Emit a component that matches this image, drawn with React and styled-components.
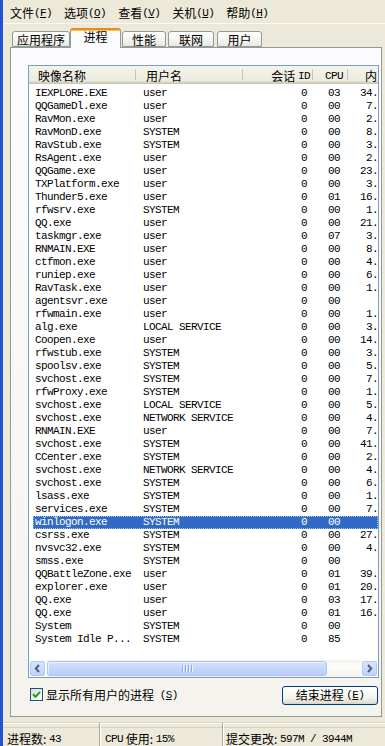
import React from 'react';
import styled, { createGlobalStyle } from 'styled-components';

const Global = createGlobalStyle`
  html, body { margin: 0; padding: 0; background: #ece9d8; }
  body { font-family: "Noto Sans CJK SC", sans-serif; font-size: 12px; color: #000; }
  #root { width: 385px; height: 746px; }
`;

const MONO = `"Liberation Mono", "DejaVu Sans Mono", monospace`;
const CJK = `"Noto Sans CJK SC", "Noto Sans", sans-serif`;

const Frame = styled.div`
  width: 385px;
  height: 746px;
  box-sizing: border-box;
  border-left: 3px solid #2452d2;
  background: #ece9d8;
  display: flex;
  flex-direction: column;
  overflow: hidden;
`;

const MenuBar = styled.div`
  height: 24px;
  flex: none;
  display: flex;
  align-items: center;
  padding: 3px 0 0 1px;
  border-bottom: 1px solid #fbfaf6;
  box-sizing: border-box;
`;

const MenuItem = styled.div`
  padding: 0 6px;
  font-family: ${CJK};
  font-size: 12px;
  line-height: 14px;
  white-space: nowrap;
  display: flex;
  align-items: center;
`;

const Latin = styled.span`
  font-family: ${MONO};
  font-size: 11px;
  letter-spacing: -0.6px;
  u { text-decoration: underline; text-underline-offset: 1px; }
`;

const TabStrip = styled.div`
  flex: none;
  height: 19px;
  margin-top: 4px;
  padding-left: 9px;
  display: flex;
  align-items: flex-end;
  position: relative;
  z-index: 2;
`;

const Tab = styled.div`
  box-sizing: border-box;
  width: ${p => p.$w}px;
  margin-left: ${p => p.$ml || 0}px;
  height: ${p => (p.$active ? 20 : 16)}px;
  margin-bottom: ${p => (p.$active ? -1 : 0)}px;
  border: 1px solid #919b9c;
  border-bottom: ${p => (p.$active ? 'none' : '1px solid #919b9c')};
  border-radius: 3px 3px 0 0;
  background: ${p => (p.$active ? '#fcfcfe' : 'linear-gradient(#ffffff, #f3f3ef 60%, #e9e8e0)')};
  ${p => p.$active && `border-top: 2px solid #e68b2c; box-shadow: inset 0 1px 0 #ffc73c;`}
  font-family: ${CJK};
  font-size: 12px;
  line-height: 12px;
  display: flex;
  justify-content: center;
  padding-top: ${p => (p.$active ? 1 : 2)}px;
  white-space: nowrap;
`;

const Panel = styled.div`
  flex: none;
  box-sizing: border-box;
  height: 670px;
  margin: 0 3px 0 7px;
  border: 1px solid #919b9c;
  background: linear-gradient(#fcfcfe, #f4f3ee);
  padding: 17px 2px 0 17px;
  display: flex;
  flex-direction: column;
`;

const List = styled.div`
  box-sizing: border-box;
  height: 613px;
  width: 351px;
  border: 1px solid #7f9db9;
  background: #fff;
  display: flex;
  flex-direction: column;
  overflow: hidden;
`;

const Header = styled.div`
  flex: none;
  height: 18px;
  display: flex;
  background: linear-gradient(#f4f3ec, #ebeadb);
  box-shadow: inset 0 -1px 0 #cbc7b8, inset 0 -2px 0 #d6d2c2, inset 0 -3px 0 #e2decd;
`;

const HeadCell = styled.div`
  box-sizing: border-box;
  flex: none;
  width: ${p => p.$w}px;
  height: 18px;
  padding: 1px ${p => p.$pr || 0}px 0 ${p => p.$pl || 0}px;
  display: flex;
  align-items: center;
  justify-content: ${p => (p.$right ? 'flex-end' : 'flex-start')};
  font-family: ${CJK};
  font-size: 12px;
  line-height: 14px;
  white-space: nowrap;
  overflow: hidden;
  position: relative;
  ${p => !p.$last && `
    &::after {
      content: '';
      position: absolute;
      right: 0;
      top: 3px;
      bottom: 4px;
      width: 1px;
      background: #c7c5b2;
      box-shadow: 1px 0 0 #fff;
    }
  `}
`;

const Rows = styled.div`
  flex: 1;
  padding-top: 3px;
  overflow: hidden;
`;

const Row = styled.div`
  height: 13px;
  margin-left: 4px;
  display: flex;
  background: ${p => (p.$sel ? '#316ac5' : 'transparent')};
  color: ${p => (p.$sel ? '#fff' : '#000')};
  ${p => p.$sel && `outline: 1px dotted #a9c0ea; outline-offset: -1px;`}
`;

const Cell = styled.div`
  box-sizing: border-box;
  flex: none;
  width: ${p => p.$w}px;
  padding: 0 ${p => p.$pr || 0}px 0 ${p => p.$pl || 0}px;
  text-align: ${p => (p.$right ? 'right' : 'left')};
  font-family: ${MONO};
  font-size: 11px;
  letter-spacing: -0.6px;
  line-height: 13px;
  white-space: nowrap;
  overflow: hidden;
`;

const HScroll = styled.div`
  flex: none;
  height: 17px;
  display: flex;
  background: #fbfbf8;
`;

const ScrollBtn = styled.div`
  box-sizing: border-box;
  width: 17px;
  height: 17px;
  flex: none;
  border: 1px solid #fff;
  display: flex;
  align-items: center;
  justify-content: center;
  > span {
    box-sizing: border-box;
    width: 15px;
    height: 15px;
    border-radius: 2px;
    border: 1px solid #b4c8f6;
    background: linear-gradient(#d9e5fe, #bfd2fc);
    display: flex;
    align-items: center;
    justify-content: center;
  }
`;

const Track = styled.div`
  flex: 1;
  display: flex;
  align-items: center;
  background: linear-gradient(#f3f2ec, #fefefb 40%, #f3f2ec);
`;

const Thumb = styled.div`
  box-sizing: border-box;
  height: 15px;
  margin-left: 1px;
  border-radius: 3px;
  border: 1px solid #aec3f3;
  background: linear-gradient(#d5e2fd, #c5d6fc 50%, #b9cdfb);
  box-shadow: inset 1px 1px 0 #e8effe;
  display: flex;
  align-items: center;
  justify-content: center;
  gap: 1px;
  > i {
    width: 1px;
    height: 7px;
    background: #8faaf0;
    box-shadow: 1px 0 0 #eef3fe;
    margin-right: 1px;
  }
`;

const Controls = styled.div`
  flex: none;
  width: 351px;
  margin-top: 7px;
  height: 19px;
  display: flex;
  align-items: center;
  justify-content: space-between;
`;

const CheckLabel = styled.label`
  display: flex;
  align-items: center;
  gap: 3px;
  padding-left: 2px;
  font-family: ${CJK};
  font-size: 12px;
  line-height: 14px;
  white-space: nowrap;
`;

const CheckBox = styled.span`
  box-sizing: border-box;
  width: 13px;
  height: 13px;
  border: 1px solid #1c5180;
  background: linear-gradient(135deg, #dcdcd7, #fff);
  display: flex;
  align-items: center;
  justify-content: center;
`;

const Button = styled.div`
  box-sizing: border-box;
  width: 96px;
  height: 19px;
  margin-top: 1px;
  border: 1px solid #003c74;
  border-radius: 3px;
  background: linear-gradient(#ffffff, #f4f4f0 60%, #e3e0d6 90%, #d6d0c5);
  display: flex;
  align-items: center;
  justify-content: center;
  font-family: ${CJK};
  font-size: 12px;
  line-height: 14px;
  white-space: nowrap;
  margin-right: 1px;
`;

const StatusBar = styled.div`
  flex: 1;
  margin-top: 5px;
  border-top: 1px solid #d8d4c4;
  box-shadow: inset 0 1px 0 #fff, inset 0 4px 0 #ece9d8, inset 0 5px 0 #d8d4c4;
  display: flex;
  align-items: stretch;
`;

const Pane = styled.div`
  box-sizing: border-box;
  width: ${p => (p.$w ? `${p.$w}px` : 'auto')};
  flex: ${p => (p.$w ? 'none' : '1')};
  padding-left: ${p => p.$pl}px;
  padding-top: 8px;
  display: flex;
  align-items: center;
  font-family: ${CJK};
  font-size: 12px;
  line-height: 14px;
  white-space: nowrap;
  ${p => p.$sep && `border-left: 1px solid #aca899; box-shadow: inset 1px 0 0 #fff;`}
`;

const data = `IEXPLORE.EXE|user|03|34
QQGameDl.exe|user|00|7
RavMon.exe|user|00|2
RavMonD.exe|SYSTEM|00|8
RavStub.exe|SYSTEM|00|3
RsAgent.exe|user|00|2
QQGame.exe|user|00|23
TXPlatform.exe|user|00|3
Thunder5.exe|user|01|16
rfwsrv.exe|SYSTEM|00|1
QQ.exe|user|00|21
taskmgr.exe|user|07|3
RNMAIN.EXE|user|00|8
ctfmon.exe|user|00|4
runiep.exe|user|00|6
RavTask.exe|user|00|1
agentsvr.exe|user|00|
rfwmain.exe|user|00|1
alg.exe|LOCAL SERVICE|00|3
Coopen.exe|user|00|14
rfwstub.exe|SYSTEM|00|3
spoolsv.exe|SYSTEM|00|5
svchost.exe|SYSTEM|00|7
rfwProxy.exe|SYSTEM|00|1
svchost.exe|LOCAL SERVICE|00|5
svchost.exe|NETWORK SERVICE|00|4
RNMAIN.EXE|user|00|7
svchost.exe|SYSTEM|00|41
CCenter.exe|SYSTEM|00|2
svchost.exe|NETWORK SERVICE|00|4
svchost.exe|SYSTEM|00|6
lsass.exe|SYSTEM|00|1
services.exe|SYSTEM|00|7
winlogon.exe|SYSTEM|00|
csrss.exe|SYSTEM|00|27
nvsvc32.exe|SYSTEM|00|4
smss.exe|SYSTEM|00|
QQBattleZone.exe|user|01|39
explorer.exe|user|01|20
QQ.exe|user|03|17
QQ.exe|user|01|16
System|SYSTEM|00|
System Idle P...|SYSTEM|85|`
  .split('\n')
  .map(l => l.split('|'));

const SELECTED = 33;

const menus = [
  ['文件', 'F'],
  ['选项', 'O'],
  ['查看', 'V'],
  ['关机', 'U'],
  ['帮助', 'H'],
];

const tabs = [
  { label: '应用程序', w: 58, ml: 0 },
  { label: '进程', w: 51, ml: 0, active: true },
  { label: '性能', w: 44, ml: 1 },
  { label: '联网', w: 46, ml: 2 },
  { label: '用户', w: 45, ml: 3 },
];

const Arrow = ({ dir }) => (
  <svg width="7" height="9" viewBox="0 0 7 9">
    <path
      d={dir === 'left' ? 'M5 1 L1.8 4.5 L5 8' : 'M2 1 L5.2 4.5 L2 8'}
      fill="none"
      stroke="#4d6185"
      strokeWidth="2"
    />
  </svg>
);

export default function App() {
  return (
    <>
      <Global />
      <Frame>
        <MenuBar>
          {menus.map(([t, k]) => (
            <MenuItem key={k}>
              {t}
              <Latin>
                (<u>{k}</u>)
              </Latin>
            </MenuItem>
          ))}
        </MenuBar>
        <TabStrip>
          {tabs.map(t => (
            <Tab key={t.label} $w={t.w} $ml={t.ml} $active={t.active}>
              {t.label}
            </Tab>
          ))}
        </TabStrip>
        <Panel>
          <List>
            <Header>
              <HeadCell $w={107} $pl={9}>映像名称</HeadCell>
              <HeadCell $w={107} $pl={10}>用户名</HeadCell>
              <HeadCell $w={70} $pr={3} $right>
                会话&nbsp;<Latin>ID</Latin>
              </HeadCell>
              <HeadCell $w={35} $pl={12}>
                <Latin>CPU</Latin>
              </HeadCell>
              <HeadCell $w={30} $pl={17} $last>内</HeadCell>
            </Header>
            <Rows>
              {data.map(([name, user, cpu, mem], i) => (
                <Row key={i} $sel={i === SELECTED}>
                  <Cell $w={103} $pl={2}>{name}</Cell>
                  <Cell $w={107} $pl={7}>{user}</Cell>
                  <Cell $w={70} $pr={6} $right>0</Cell>
                  <Cell $w={35} $pl={15}>{cpu}</Cell>
                  <Cell $w={30} $right>{mem ? `${mem}.` : ''}</Cell>
                </Row>
              ))}
            </Rows>
            <HScroll>
              <ScrollBtn>
                <span>
                  <Arrow dir="left" />
                </span>
              </ScrollBtn>
              <Track>
                <Thumb style={{ width: 280 }}>
                  <i />
                  <i />
                  <i />
                  <i />
                </Thumb>
              </Track>
              <ScrollBtn>
                <span>
                  <Arrow dir="right" />
                </span>
              </ScrollBtn>
            </HScroll>
          </List>
          <Controls>
            <CheckLabel>
              <CheckBox>
                <svg width="9" height="9" viewBox="0 0 9 9">
                  <path d="M1 4.2 L3.5 6.8 L8 1.8" fill="none" stroke="#21a121" strokeWidth="2" />
                </svg>
              </CheckBox>
              显示所有用户的进程&nbsp;
              <Latin>
                (<u>S</u>)
              </Latin>
            </CheckLabel>
            <Button>
              结束进程&nbsp;
              <Latin>
                (<u>E</u>)
              </Latin>
            </Button>
          </Controls>
        </Panel>
        <StatusBar>
          <Pane $w={96} $pl={4}>
            进程数:&nbsp;<Latin>43</Latin>
          </Pane>
          <Pane $w={123} $pl={5} $sep>
            <Latin>CPU</Latin>&nbsp;使用:&nbsp;<Latin>15%</Latin>
          </Pane>
          <Pane $pl={3} $sep>
            提交更改:&nbsp;<Latin>597M / 3944M</Latin>
          </Pane>
        </StatusBar>
      </Frame>
    </>
  );
}
